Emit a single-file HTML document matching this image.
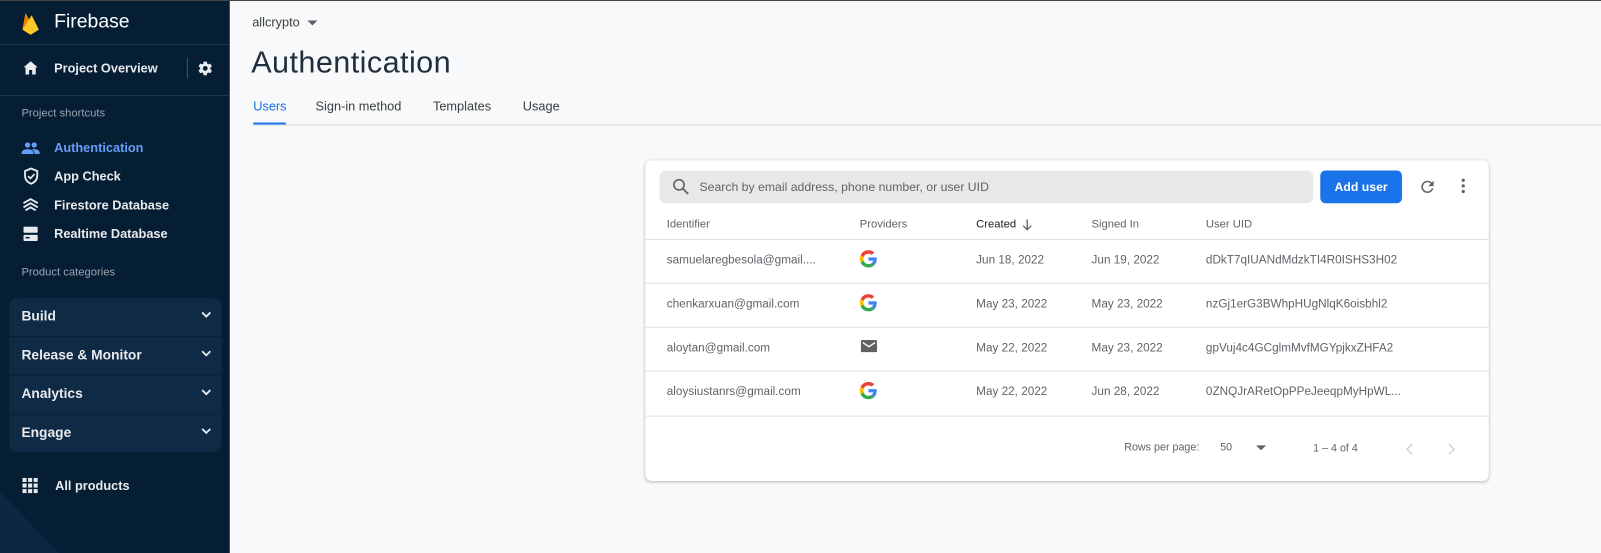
<!DOCTYPE html>
<html><head><meta charset="utf-8"><style>
*{margin:0;padding:0;box-sizing:border-box}
html,body{width:1601px;height:553px;overflow:hidden}
body{font-family:"Liberation Sans",sans-serif;background:#f8f9fa;position:relative}
#w{position:absolute;left:0;top:0;width:1568px;height:542px;transform:scale(1.0211);transform-origin:0 0;overflow:hidden}
#sb{position:absolute;left:0;top:0;width:225px;height:542px;background:#051e34;overflow:hidden;color:#e8eaed}
.line{position:absolute;left:0;width:225px;height:1px;background:#1d3750}
.t{position:absolute;white-space:nowrap}
.b{font-weight:bold;font-size:12.5px;color:#e8eaed}
.grp{position:absolute;left:9px;top:292px;width:208px;height:151px;background:#0f2a44;border-radius:8px}
.grp div{height:38px;border-bottom:1px solid #08213a;position:relative;font-weight:bold;font-size:13.5px;color:#e8eaed;padding:10px 0 0 12px}
.grp div:last-child{border:none}
.grp svg{position:absolute;right:10px;top:13px}
#top{position:absolute;left:0;top:0;width:1601px;height:1px;background:#444}
.th{position:absolute;top:214px;font-size:11px;color:#5f6368}
.row{position:absolute;left:632px;width:826px;height:43px;border-top:1px solid #e0e0e0}
.row span{position:absolute;top:14px;font-size:11.5px;color:#5f6368;white-space:nowrap}
</style></head><body>
<div id="w">
<div id="sb">
<svg class="t" style="left:0;top:470px" width="80" height="80"><path d="M0 12 L66 80 H0Z" fill="#0b2742"/></svg>
<svg class="t" style="left:20px;top:9px" width="20" height="26" viewBox="0 0 20 26"><path d="M2 20 L5 4 L9 11 L11 6 L18 20 L10 25Z" fill="#ffa000"/><path d="M2 20 L5 4 L9 11Z" fill="#f57c00"/><path d="M2 20 L11 6 L18 20 L10 25Z" fill="#ffca28"/></svg>
<div class="t" style="left:53px;top:11px;font-size:19px;color:#fff">Firebase</div>
<div class="line" style="top:43px"></div>
<svg class="t" style="left:22px;top:59px" width="16" height="15" viewBox="0 0 16 15"><path d="M8 1 L1 7 H3 V14 H6.5 V9.5 H9.5 V14 H13 V7 H15Z" fill="#e8eaed"/></svg>
<div class="t b" style="left:53px;top:60px">Project Overview</div>
<div class="t" style="left:183px;top:57px;width:1px;height:20px;background:#3c546b"></div>
<svg class="t" style="left:193px;top:59px" width="16" height="16" viewBox="0 0 24 24"><path fill="#e8eaed" d="M19.4 13c.04-.3.06-.66.06-1s-.02-.7-.06-1l2.1-1.65c.2-.15.24-.42.12-.64l-2-3.46c-.12-.22-.38-.3-.6-.22l-2.5 1c-.52-.4-1.08-.72-1.7-.98L14.5 2.4c-.03-.24-.24-.4-.5-.4h-4c-.25 0-.46.18-.5.42l-.37 2.650c-.62.25-1.18.6-1.7.98l-2.5-1c-.22-.08-.48 0-.6.22l-2 3.46c-.13.22-.07.5.12.64L4.57 11c-.04.32-.07.65-.07 1s.03.68.07 1l-2.1 1.65c-.2.15-.25.42-.13.64l2 3.46c.12.22.38.3.6.22l2.5-1c.52.4 1.08.72 1.7.98l.37 2.65c.04.24.25.4.5.4h4c.25 0 .46-.18.5-.42l.37-2.65c.62-.25 1.18-.6 1.7-.98l2.5 1c.22.08.48 0 .6-.22l2-3.46c.12-.22.07-.5-.12-.64L19.4 13zM12 15.5c-1.93 0-3.5-1.57-3.5-3.5s1.57-3.5 3.5-3.5 3.5 1.57 3.5 3.5-1.57 3.5-3.5 3.5z"/></svg>
<div class="line" style="top:93px"></div>
<div class="t" style="left:21px;top:105px;font-size:11px;color:#9aa5b1">Project shortcuts</div>
<svg class="t" style="left:21px;top:139px" width="18" height="12" viewBox="0 0 18 12"><circle cx="6" cy="3" r="2.6" fill="#669df6"/><circle cx="12.5" cy="3" r="2.6" fill="#669df6"/><path d="M0 12 Q0 7 6 7 Q12 7 12 12Z M10 7.3 Q18 6 18 12 H13 Q13 9 10 7.3Z" fill="#669df6"/></svg>
<div class="t b" style="left:53px;top:138px;color:#669df6">Authentication</div>
<svg class="t" style="left:23px;top:164px" width="15" height="17" viewBox="0 0 15 17"><path d="M7.5 1 L13.5 3.5 V8 Q13.5 13.5 7.5 16 Q1.5 13.5 1.5 8 V3.5Z" fill="none" stroke="#e8eaed" stroke-width="1.8"/><path d="M4.5 8.5 L6.8 10.8 L10.8 6.5" fill="none" stroke="#e8eaed" stroke-width="1.6"/></svg>
<div class="t b" style="left:53px;top:166px">App Check</div>
<svg class="t" style="left:22px;top:194px" width="16" height="15" viewBox="0 0 16 15"><path d="M1 5 L8 1 L15 5 M1 9 L8 5 L15 9 M3 12 L8 9 L13 12" fill="none" stroke="#e8eaed" stroke-width="1.8"/></svg>
<div class="t b" style="left:53px;top:194px">Firestore Database</div>
<svg class="t" style="left:23px;top:222px" width="14" height="15" viewBox="0 0 14 15"><rect x="0" y="0" width="14" height="6" rx="1" fill="#e8eaed"/><rect x="0" y="8" width="14" height="6" rx="1" fill="#e8eaed"/><rect x="2" y="10" width="4" height="1.5" fill="#051e34"/></svg>
<div class="t b" style="left:53px;top:222px">Realtime Database</div>
<div class="t" style="left:21px;top:261px;font-size:11px;color:#9aa5b1">Product categories</div>
<div class="grp">
<div>Build<svg width="10" height="7" viewBox="0 0 10 7"><path d="M1 1 L5 5 L9 1" fill="none" stroke="#e8eaed" stroke-width="1.8"/></svg></div>
<div>Release &amp; Monitor<svg width="10" height="7" viewBox="0 0 10 7"><path d="M1 1 L5 5 L9 1" fill="none" stroke="#e8eaed" stroke-width="1.8"/></svg></div>
<div>Analytics<svg width="10" height="7" viewBox="0 0 10 7"><path d="M1 1 L5 5 L9 1" fill="none" stroke="#e8eaed" stroke-width="1.8"/></svg></div>
<div>Engage<svg width="10" height="7" viewBox="0 0 10 7"><path d="M1 1 L5 5 L9 1" fill="none" stroke="#e8eaed" stroke-width="1.8"/></svg></div>
</div>
<svg class="t" style="left:22px;top:468px" width="15" height="15" viewBox="0 0 15 15"><g fill="#e8eaed"><rect x="0" y="0" width="4" height="4"/><rect x="5.5" y="0" width="4" height="4"/><rect x="11" y="0" width="4" height="4"/><rect x="0" y="5.5" width="4" height="4"/><rect x="5.5" y="5.5" width="4" height="4"/><rect x="11" y="5.5" width="4" height="4"/><rect x="0" y="11" width="4" height="4"/><rect x="5.5" y="11" width="4" height="4"/><rect x="11" y="11" width="4" height="4"/></g></svg>
<div class="t b" style="left:54px;top:469px">All products</div>
</div>
<div id="top"></div>

<div class="t" style="left:247px;top:15px;font-size:12.5px;color:#3c4043">allcrypto</div>
<svg class="t" style="left:301px;top:20px" width="10" height="5"><path d="M0 0 H10 L5 5Z" fill="#5f6368"/></svg>
<div class="t" style="left:246px;top:45px;font-size:30px;letter-spacing:0.4px;color:#1f2f3d">Authentication</div>
<div class="t" style="left:248px;top:97px;font-size:12.5px;color:#1a73e8">Users</div>
<div class="t" style="left:309px;top:97px;font-size:12.5px;color:#3c4043">Sign-in method</div>
<div class="t" style="left:424px;top:97px;font-size:12.5px;color:#3c4043">Templates</div>
<div class="t" style="left:512px;top:97px;font-size:12.5px;color:#3c4043">Usage</div>
<div class="t" style="left:248px;top:120px;width:32px;height:2px;background:#1a73e8"></div>
<div class="t" style="left:248px;top:122px;width:1353px;height:1px;background:#dadce0"></div>

<div class="t" style="left:632px;top:157px;width:826px;height:314px;background:#fff;border-radius:6px;box-shadow:0 1px 3px rgba(0,0,0,.25)"></div>
<div class="t" style="left:646px;top:167px;width:640px;height:32px;background:#e8e8e8;border-radius:6px"></div>
<svg class="t" style="left:658px;top:174px" width="18" height="18" viewBox="0 0 18 18"><circle cx="7" cy="7" r="5" fill="none" stroke="#5f6368" stroke-width="1.6"/><path d="M10.5 10.5 L16 16" stroke="#5f6368" stroke-width="1.8"/></svg>
<div class="t" style="left:685px;top:176px;font-size:12px;color:#5f6368">Search by email address, phone number, or user UID</div>
<div class="t" style="left:1293px;top:167px;width:80px;height:32px;background:#1a73e8;border-radius:5px;color:#fff;font-weight:bold;font-size:12px;text-align:center;line-height:32px">Add user</div>
<svg class="t" style="left:1389px;top:174px" width="18" height="18" viewBox="0 0 24 24"><path fill="#5f6368" d="M17.65 6.35A7.96 7.96 0 0 0 12 4a8 8 0 1 0 7.73 10h-2.08A6 6 0 1 1 12 6c1.66 0 3.14.69 4.22 1.78L13 11h7V4l-2.35 2.35z"/></svg>
<svg class="t" style="left:1430px;top:174px" width="6" height="16"><circle cx="3" cy="2.5" r="1.6" fill="#5f6368"/><circle cx="3" cy="8" r="1.6" fill="#5f6368"/><circle cx="3" cy="13.5" r="1.6" fill="#5f6368"/></svg>

<div class="th" style="left:653px">Identifier</div>
<div class="th" style="left:842px">Providers</div>
<div class="th" style="left:956px;color:#202124">Created</div>
<svg class="t" style="left:1001px;top:215px" width="10" height="12"><path d="M5 0 V10 M1 6 L5 10 L9 6" fill="none" stroke="#5f6368" stroke-width="1.3"/></svg>
<div class="th" style="left:1069px">Signed In</div>
<div class="th" style="left:1181px">User UID</div>

<div class="row" style="top:234px"><span style="left:21px">samuelaregbesola@gmail....</span><span style="left:324px">Jun 18, 2022</span><span style="left:437px">Jun 19, 2022</span><span style="left:549px">dDkT7qIUANdMdzkTI4R0ISHS3H02</span></div>
<div class="row" style="top:277px"><span style="left:21px">chenkarxuan@gmail.com</span><span style="left:324px">May 23, 2022</span><span style="left:437px">May 23, 2022</span><span style="left:549px">nzGj1erG3BWhpHUgNlqK6oisbhl2</span></div>
<div class="row" style="top:320px"><span style="left:21px">aloytan@gmail.com</span><span style="left:324px">May 22, 2022</span><span style="left:437px">May 23, 2022</span><span style="left:549px">gpVuj4c4GCglmMvfMGYpjkxZHFA2</span></div>
<div class="row" style="top:363px"><span style="left:21px">aloysiustanrs@gmail.com</span><span style="left:324px">May 22, 2022</span><span style="left:437px">Jun 28, 2022</span><span style="left:549px">0ZNQJrARetOpPPeJeeqpMyHpWL...</span></div>
<div class="row" style="top:407px;height:1px"></div>

<svg class="t" style="left:842px;top:245px" width="17" height="17" viewBox="0 0 48 48"><path fill="#EA4335" d="M24 9.5c3.54 0 6.71 1.22 9.21 3.6l6.85-6.85C35.9 2.38 30.47 0 24 0 14.62 0 6.51 5.38 2.56 13.22l7.98 6.19C12.43 13.72 17.74 9.5 24 9.5z"/><path fill="#4285F4" d="M46.98 24.55c0-1.57-.15-3.09-.38-4.55H24v9.02h12.94c-.58 2.96-2.26 5.48-4.78 7.18l7.73 6c4.51-4.18 7.09-10.36 7.09-17.65z"/><path fill="#FBBC05" d="M10.53 28.59c-.48-1.45-.76-2.99-.76-4.59s.27-3.14.76-4.59l-7.98-6.19C.92 16.46 0 20.12 0 24c0 3.88.92 7.54 2.56 10.78l7.97-6.19z"/><path fill="#34A853" d="M24 48c6.48 0 11.93-2.13 15.89-5.81l-7.73-6c-2.15 1.45-4.92 2.3-8.16 2.3-6.26 0-11.57-4.22-13.47-9.91l-7.98 6.19C6.51 42.62 14.62 48 24 48z"/></svg>
<svg class="t" style="left:842px;top:288px" width="17" height="17" viewBox="0 0 48 48"><path fill="#EA4335" d="M24 9.5c3.54 0 6.71 1.22 9.21 3.6l6.85-6.85C35.9 2.38 30.47 0 24 0 14.62 0 6.51 5.38 2.56 13.22l7.98 6.19C12.43 13.72 17.74 9.5 24 9.5z"/><path fill="#4285F4" d="M46.98 24.55c0-1.57-.15-3.09-.38-4.55H24v9.02h12.94c-.58 2.96-2.26 5.48-4.78 7.18l7.73 6c4.51-4.18 7.09-10.36 7.09-17.65z"/><path fill="#FBBC05" d="M10.53 28.59c-.48-1.45-.76-2.99-.76-4.59s.27-3.14.76-4.59l-7.98-6.19C.92 16.46 0 20.12 0 24c0 3.88.92 7.54 2.56 10.78l7.97-6.19z"/><path fill="#34A853" d="M24 48c6.48 0 11.93-2.13 15.89-5.81l-7.73-6c-2.15 1.45-4.92 2.3-8.16 2.3-6.26 0-11.57-4.22-13.47-9.91l-7.98 6.19C6.51 42.62 14.62 48 24 48z"/></svg>
<svg class="t" style="left:843px;top:333px" width="16" height="12" viewBox="0 0 16 12"><rect width="16" height="12" rx="1.5" fill="#616161"/><path d="M2 2.5 L8 6.5 L14 2.5" fill="none" stroke="#fff" stroke-width="1.3"/></svg>
<svg class="t" style="left:842px;top:374px" width="17" height="17" viewBox="0 0 48 48"><path fill="#EA4335" d="M24 9.5c3.54 0 6.71 1.22 9.21 3.6l6.85-6.85C35.9 2.38 30.47 0 24 0 14.62 0 6.51 5.38 2.56 13.22l7.98 6.19C12.43 13.72 17.74 9.5 24 9.5z"/><path fill="#4285F4" d="M46.98 24.55c0-1.57-.15-3.09-.38-4.55H24v9.02h12.94c-.58 2.96-2.26 5.48-4.78 7.18l7.73 6c4.51-4.18 7.09-10.36 7.09-17.65z"/><path fill="#FBBC05" d="M10.53 28.59c-.48-1.45-.76-2.99-.76-4.59s.27-3.14.76-4.59l-7.98-6.19C.92 16.46 0 20.12 0 24c0 3.88.92 7.54 2.56 10.78l7.97-6.19z"/><path fill="#34A853" d="M24 48c6.48 0 11.93-2.13 15.89-5.81l-7.73-6c-2.15 1.45-4.92 2.3-8.16 2.3-6.26 0-11.57-4.22-13.47-9.91l-7.98 6.19C6.51 42.62 14.62 48 24 48z"/></svg>

<div class="t" style="left:1101px;top:432px;font-size:10.5px;color:#5f6368">Rows per page:</div>
<div class="t" style="left:1195px;top:432px;font-size:10.5px;color:#5f6368">50</div>
<svg class="t" style="left:1230px;top:436px" width="10" height="5"><path d="M0 0 H10 L5 5Z" fill="#5f6368"/></svg>
<div class="t" style="left:1286px;top:433px;font-size:10.5px;color:#5f6368">1 – 4 of 4</div>
<svg class="t" style="left:1377px;top:434px" width="7" height="12"><path d="M6 1 L1 6 L6 11" fill="none" stroke="#d0d0d0" stroke-width="1.4"/></svg>
<svg class="t" style="left:1418px;top:434px" width="7" height="12"><path d="M1 1 L6 6 L1 11" fill="none" stroke="#d0d0d0" stroke-width="1.4"/></svg>
</div>
</body></html>
